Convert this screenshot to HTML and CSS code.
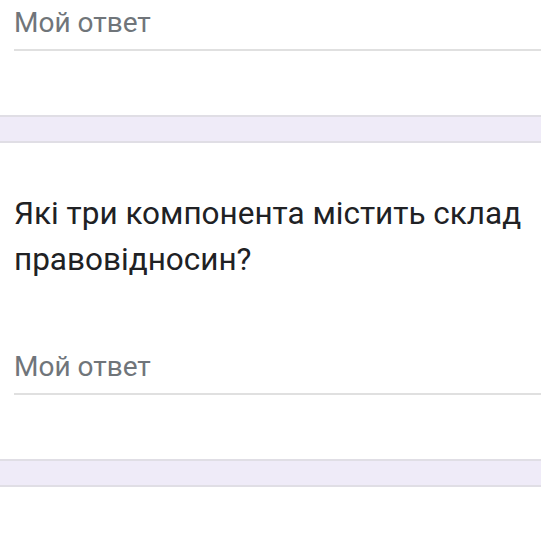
FILE: index.html
```html
<!DOCTYPE html>
<html>
<head>
    <title>Форма</title>
    <link rel="stylesheet" href="styles.css">
</head>
<body>
    <div class="card first">
        <div class="answer">Мой ответ</div>
    </div>
    <div class="divider"></div>
    <div class="card question">
        <div class="title">Які три компонента містить склад правовідносин?</div>
        <div class="answer">Мой ответ</div>
    </div>
    <div class="divider"></div>
    <div class="card"></div>
</body>
</html>
```

FILE: styles.css
```css
body { margin: 0; background: #fff; font-family: Roboto, "Noto Sans", Arial, sans-serif; overflow: hidden; }
.card { background: #fff; padding: 0 14px 64px 14px; }
.card.first { padding-top: 5px; }
.card.question { padding-top: 48px; }
.title { font-size: 31.5px; line-height: 46px; color: #202124; }
.question .answer { margin-top: 66px; }
.answer { font-size: 28px; line-height: 36px; color: #70757a; padding-bottom: 8px; border-bottom: 2px solid #e0e0e0; margin-right: -14px; }
.divider { height: 24px; background: #efebf8; border-top: 2px solid #e0dee5; border-bottom: 2px solid #e0dee5; }
```
